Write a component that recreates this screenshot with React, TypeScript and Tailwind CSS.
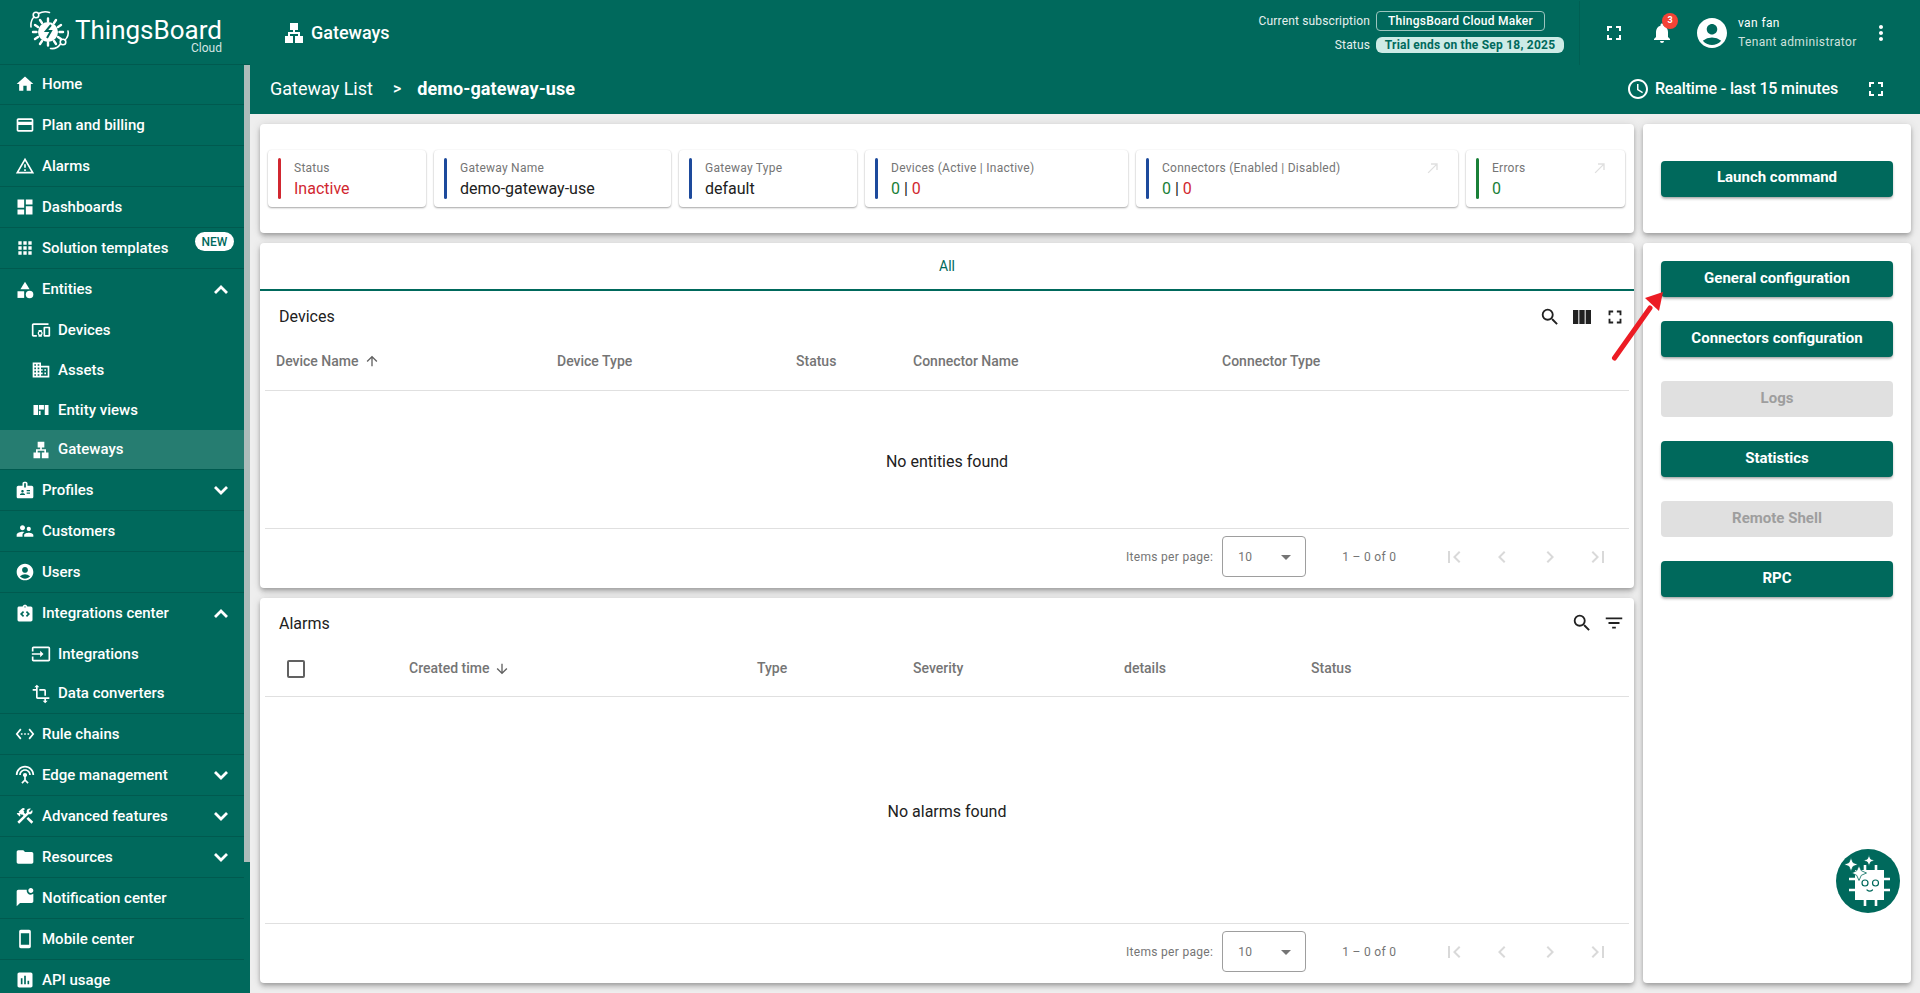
import {
  MdAccessTime,
  MdAccountCircle,
  MdApps,
  MdArrowDownward,
  MdArrowDropDown,
  MdArrowUpward,
  MdBadge,
  MdCallMade,
  MdCategory,
  MdChevronLeft,
  MdChevronRight,
  MdConstruction,
  MdCreditCard,
  MdDashboard,
  MdDevicesOther,
  MdDomain,
  MdFilterList,
  MdFirstPage,
  MdFolder,
  MdFullscreen,
  MdHome,
  MdInput,
  MdInsertChart,
  MdIntegrationInstructions,
  MdLan,
  MdLastPage,
  MdMarkChatUnread,
  MdMoreVert,
  MdNotifications,
  MdOutlineWarningAmber,
  MdSearch,
  MdSettingsEthernet,
  MdSettingsInputAntenna,
  MdSmartphone,
  MdSupervisorAccount,
  MdTransform,
  MdViewColumn,
} from 'react-icons/md';
import type { IconBaseProps, IconType } from 'react-icons';

// no package has this one
const EntityViewIcon = ({ size, className }: IconBaseProps) => (
  <svg width={size} height={size} viewBox="0 0 24 24" fill="currentColor" className={className}>
    <rect x="3" y="6" width="5.500" height="12" />
    <rect x="9.500" y="6" width="6" height="5.500" />
    <rect x="9.500" y="13" width="2" height="5" />
    <rect x="16.500" y="6" width="4.500" height="12" />
  </svg>
);

// the package chevrons are too thin here
const Chevron = ({ up }: { up?: boolean }) => (
  <svg width="24" height="24" viewBox="0 0 24 24" className="absolute left-[209px]">
    <path
      d={up ? 'M6 15l6-6 6 6' : 'M6 9l6 6 6-6'}
      fill="none"
      stroke="currentColor"
      strokeWidth="2.800"
    />
  </svg>
);

type NavItem = {
  label: string;
  icon: IconType;
  sub?: boolean;
  active?: boolean;
  chevron?: 'up' | 'down';
  isNew?: boolean;
};

const navItems: NavItem[] = [
  { label: 'Home', icon: MdHome },
  { label: 'Plan and billing', icon: MdCreditCard },
  { label: 'Alarms', icon: MdOutlineWarningAmber },
  { label: 'Dashboards', icon: MdDashboard },
  { label: 'Solution templates', icon: MdApps, isNew: true },
  { label: 'Entities', icon: MdCategory, chevron: 'up' },
  { label: 'Devices', icon: MdDevicesOther, sub: true },
  { label: 'Assets', icon: MdDomain, sub: true },
  { label: 'Entity views', icon: EntityViewIcon, sub: true },
  { label: 'Gateways', icon: MdLan, sub: true, active: true },
  { label: 'Profiles', icon: MdBadge, chevron: 'down' },
  { label: 'Customers', icon: MdSupervisorAccount },
  { label: 'Users', icon: MdAccountCircle },
  { label: 'Integrations center', icon: MdIntegrationInstructions, chevron: 'up' },
  { label: 'Integrations', icon: MdInput, sub: true },
  { label: 'Data converters', icon: MdTransform, sub: true },
  { label: 'Rule chains', icon: MdSettingsEthernet },
  { label: 'Edge management', icon: MdSettingsInputAntenna, chevron: 'down' },
  { label: 'Advanced features', icon: MdConstruction, chevron: 'down' },
  { label: 'Resources', icon: MdFolder, chevron: 'down' },
  { label: 'Notification center', icon: MdMarkChatUnread },
  { label: 'Mobile center', icon: MdSmartphone },
  { label: 'API usage', icon: MdInsertChart },
];

const cardShadow =
  'shadow-[0_2px_4px_-1px_rgba(0,0,0,0.2),0_4px_5px_0_rgba(0,0,0,0.14),0_1px_10px_0_rgba(0,0,0,0.12)]';

const NavRow = ({ item, next }: { item: NavItem; next?: NavItem }) => {
  const Icon = item.icon;
  return (
    <div
      className={`relative flex shrink-0 items-center text-[15px] font-medium text-white ${
        item.sub ? 'h-[40px] pl-[31px]' : 'h-[41px] pl-[15px]'
      } ${item.active ? 'bg-[#267d71]' : ''} ${
        !next?.sub ? 'border-b border-[#005a4f]' : ''
      }`}
    >
      <Icon size={20} className="shrink-0" />
      <span className="ml-[7px]">{item.label}</span>
      {item.chevron && <Chevron up={item.chevron === 'up'} />}
      {item.isNew && (
        <span className="absolute left-[195px] top-[4px] flex h-[19px] w-[39px] items-center justify-center rounded-full bg-white text-[12px] font-medium text-[#00695c]">
          NEW
        </span>
      )}
    </div>
  );
};

const Logo = () => (
  <svg width="44" height="46" viewBox="0 0 44 46" className="shrink-0">
    <g fill="none" stroke="white" strokeWidth="1.600" strokeLinecap="round">
      <path d="M1 18c-.5-5 1-8 3-10" />
      <circle cx="6" cy="6" r="2.800" />
      <path d="M8.500 4.500c3-1.500 8-2 11-1" />
      <path d="M38 22c1 4 0 6-3 9" />
      <circle cx="33" cy="33" r="2.800" />
      <path d="M30.500 35c-2 3-6 5-10 4.500" />
    </g>
    <g stroke="white" strokeWidth="2.400" strokeLinecap="round">
      <path d="M18 12.500v-3M24 14l2-3M28 18l3-2M29.500 23h3.500M28 28l3 2M24 32l2 3M18 33.500v3M12 32l-2 3M8 28l-3 2M6.500 23H3M8 18l-3-2M12 14l-2-3" />
    </g>
    <circle cx="18" cy="23" r="10" fill="white" />
    <path d="M21 16l-5 6h5l-4 7" fill="none" stroke="#00695c" strokeWidth="2" />
  </svg>
);

const Tile = ({
  width,
  bar,
  label,
  children,
  link,
}: {
  width: string;
  bar: string;
  label: string;
  children: React.ReactNode;
  link?: boolean;
}) => (
  <div
    className={`relative flex h-[57px] shrink-0 items-center rounded-[4px] bg-white pl-[10px] shadow-[0_1px_2px_rgba(0,0,0,0.35),0_0_2px_rgba(0,0,0,0.06)] ${width}`}
  >
    <div className={`h-[41px] w-[3px] rounded-full ${bar}`} />
    <div className="ml-[13px] pt-[1px]">
      <div className="text-[12px] leading-[16px] tracking-[0.25px] text-[#757575]">{label}</div>
      <div className="mt-[3px] text-[16px] leading-[20px]">{children}</div>
    </div>
    {link && <MdCallMade size={16} className="absolute right-[17px] top-[10px] text-[#dfdfdf]" />}
  </div>
);

const ZeroPair = () => (
  <>
    <span className="text-[#198038]">0</span>
    <span className="text-[#212121]"> | </span>
    <span className="text-[#d12730]">0</span>
  </>
);

const Pagination = () => (
  <div className="h-[60px] shrink-0 border-t border-[#e0e0e0] pt-[7px] text-[12px] tracking-[0.3px] text-[#757575]">
    <div className="flex h-[41px] items-center">
      <span className="ml-[861px]">Items per page:</span>
      <div className="ml-[9px] flex h-[41px] w-[84px] items-center rounded-[4px] border border-[#9e9e9e] pl-[15px] pr-[7px]">
        <span>10</span>
        <MdArrowDropDown size={24} className="ml-auto" />
      </div>
      <span className="ml-[36px] w-[79px]">1 – 0 of 0</span>
      <div className="ml-[21px] flex items-center gap-[24px] text-[#d9d9d9]">
        <MdFirstPage size={24} />
        <MdChevronLeft size={24} />
        <MdChevronRight size={24} />
        <MdLastPage size={24} />
      </div>
    </div>
  </div>
);

const HeaderCell = ({ width, children }: { width: string; children: React.ReactNode }) => (
  <div className={`flex shrink-0 items-center text-[14px] font-medium text-[#757575] ${width}`}>
    {children}
  </div>
);

const ActionButton = ({ label, disabled }: { label: string; disabled?: boolean }) => (
  <div
    className={`flex h-[36px] items-center justify-center rounded-[4px] pb-[2px] text-[15px] font-bold ${
      disabled
        ? 'bg-[#e0e0e0] text-[#9e9e9e]'
        : 'bg-[#00695c] text-white shadow-[0_2px_3px_-1px_rgba(0,0,0,0.3),0_2px_3px_0_rgba(0,0,0,0.14)]'
    }`}
  >
    {label}
  </div>
);

const ChipBot = () => (
  <svg width="64" height="64" viewBox="0 0 64 64">
    <circle cx="32" cy="32" r="32" fill="#00695c" />
    <g stroke="white" strokeWidth="2.600">
      <path d="M29 16v6M40 16v6M29 50v7M40 50v7M13 30h7M13 41h7M47 30h7M47 41h7" />
    </g>
    <rect x="19" y="21" width="29" height="30" fill="white" />
    <path
      d="M15 8.500l2 5 5 2-5 2-2 5-2-5-5-2 5-2zM33 6l1.600 3.900 3.900 1.600-3.900 1.600L33 17l-1.600-3.900-3.900-1.600 3.900-1.600zM23 16.500l2.300 5.200 5.200 2.300-5.200 2.300-2.300 5.200-2.300-5.200-5.200-2.300 5.200-2.300z"
      fill="white"
      stroke="#00695c"
      strokeWidth="0.800"
    />
    <g fill="none" stroke="#00695c" strokeWidth="1.200" strokeLinecap="round">
      <circle cx="29" cy="34" r="3" />
      <circle cx="39.500" cy="34" r="3" />
      <path d="M31 41c1.500 1.300 4 1.300 5.500 0" />
    </g>
  </svg>
);

export default function App() {
  return (
    <div className="relative flex h-screen w-full overflow-hidden bg-[#eeeeee] font-['Roboto',sans-serif] text-[#212121]">
      {/* sidebar */}
      <aside className="flex w-[250px] shrink-0 flex-col bg-[#00695c] text-white">
        <div className="flex h-[65px] shrink-0 items-center border-b border-[#005a4f] pl-[30px]">
          <Logo />
          <div className="ml-[1px] flex flex-col items-end">
            <span className="mt-[10px] text-[26px] leading-[22px]">ThingsBoard</span>
            <span className="text-[12px] leading-[14px] text-[#d5e5e3]">Cloud</span>
          </div>
        </div>
        <div className="flex min-h-0 flex-1">
          <nav className="mt-[-1px] flex w-[244px] shrink-0 flex-col overflow-hidden">
            {navItems.map((item, i) => (
              <NavRow key={item.label} item={item} next={navItems[i + 1]} />
            ))}
          </nav>
          <div className="h-[797px] w-[6px] bg-[#aebcba]" />
        </div>
      </aside>

      {/* main column */}
      <div className="flex min-w-0 flex-1 flex-col">
        <header className="flex h-[65px] shrink-0 items-center bg-[#00695c] text-white">
          <MdLan size={24} className="ml-[32px]" />
          <span className="ml-[5px] text-[18px] font-medium">Gateways</span>
          <div className="ml-auto flex flex-col gap-[5px] text-[12px] tracking-[0.15px]">
            <div className="flex items-center justify-end">
              <span className="mr-[6px] text-[#e6f0ef]">Current subscription</span>
              <span className="mr-[19px] flex h-[20px] w-[169px] items-center justify-center rounded-[4px] border border-[#9cc4be] font-medium tracking-[0.25px]">
                ThingsBoard Cloud Maker
              </span>
            </div>
            <div className="flex items-center justify-end">
              <span className="mr-[6px] text-[#e6f0ef]">Status</span>
              <span className="flex h-[16px] w-[188px] items-center justify-center rounded-[6px] bg-[#cdebe6] font-bold tracking-[0.22px] text-[#00695c]">
                Trial ends on the Sep 18, 2025
              </span>
            </div>
          </div>
          <div className="ml-[15px] flex h-[64px] w-[341px] items-center border-l border-[#005f53]">
            <MdFullscreen size={24} className="ml-[22px]" />
            <div className="relative ml-[24px]">
              <MdNotifications size={24} />
              <span className="absolute left-[12px] top-[-8px] flex h-[16px] w-[16px] items-center justify-center rounded-full bg-[#f44336] text-[9px] font-bold">
                3
              </span>
            </div>
            <MdAccountCircle size={36} className="ml-[20px]" />
            <div className="ml-[8px] flex flex-col text-[12px] leading-[19px] tracking-[0.38px]">
              <span>van fan</span>
              <span className="text-[#cfe1de]">Tenant administrator</span>
            </div>
            <MdMoreVert size={24} className="ml-[12px]" />
          </div>
        </header>

        <div className="flex h-[49px] shrink-0 items-center bg-[#00695c] pb-[2px] text-white">
          <span className="ml-[20px] text-[18px]">Gateway List</span>
          <span className="ml-[20px] text-[16px] font-medium">&gt;</span>
          <span className="ml-[16px] text-[18px] font-bold tracking-[0.1px]">demo-gateway-use</span>
          <MdAccessTime size={24} className="ml-auto" />
          <span className="ml-[5px] text-[16px] font-medium tracking-[-0.15px]">Realtime - last 15 minutes</span>
          <MdFullscreen size={24} className="ml-[26px] mr-[32px]" />
        </div>

        <main className="flex min-h-0 flex-1 gap-[9px] pl-[10px] pt-[10px]">
          <div className="flex w-[1374px] shrink-0 flex-col gap-[10px]">
            <section className={`flex h-[109px] shrink-0 items-center gap-[8px] rounded-[4px] bg-white pl-[8px] ${cardShadow}`}>
              <Tile width="w-[158px]" bar="bg-[#d12730]" label="Status">
                <span className="text-[#d12730]">Inactive</span>
              </Tile>
              <Tile width="w-[237px]" bar="bg-[#1d4a9c]" label="Gateway Name">
                demo-gateway-use
              </Tile>
              <Tile width="w-[178px]" bar="bg-[#1d4a9c]" label="Gateway Type">
                default
              </Tile>
              <Tile width="w-[263px]" bar="bg-[#1d4a9c]" label="Devices (Active | Inactive)">
                <ZeroPair />
              </Tile>
              <Tile width="w-[322px]" bar="bg-[#1d4a9c]" label="Connectors (Enabled | Disabled)" link>
                <ZeroPair />
              </Tile>
              <Tile width="w-[159px]" bar="bg-[#198038]" label="Errors" link>
                <span className="text-[#198038]">0</span>
              </Tile>
            </section>

            <section className={`flex h-[345px] shrink-0 flex-col rounded-[4px] bg-white ${cardShadow}`}>
              <div className="flex h-[48px] shrink-0 items-center justify-center border-b-2 border-[#00695c] text-[14px] text-[#00695c]">
                All
              </div>
              <div className="mx-[5px] flex flex-1 flex-col">
                <div className="flex h-[52px] shrink-0 items-center pl-[14px]">
                  <span className="text-[16px]">Devices</span>
                  <MdSearch size={22} className="ml-auto" />
                  <MdViewColumn size={24} className="ml-[9px]" />
                  <MdFullscreen size={22} className="ml-[10px] mr-[3px]" />
                </div>
                <div className="flex h-[48px] shrink-0 items-center border-b border-[#e0e0e0] pb-[11px] pl-[11px]">
                  <HeaderCell width="w-[281px]">
                    Device Name
                    <MdArrowUpward size={16} className="ml-[5px] text-[#616161]" />
                  </HeaderCell>
                  <HeaderCell width="w-[239px]">Device Type</HeaderCell>
                  <HeaderCell width="w-[117px]">Status</HeaderCell>
                  <HeaderCell width="w-[309px]">Connector Name</HeaderCell>
                  <HeaderCell width="w-[200px]">Connector Type</HeaderCell>
                </div>
                <div className="flex flex-1 items-center justify-center pt-[4px] text-[16px]">No entities found</div>
                <Pagination />
              </div>
            </section>

            <section className={`flex h-[385px] shrink-0 flex-col rounded-[4px] bg-white ${cardShadow}`}>
              <div className="mx-[5px] flex flex-1 flex-col">
                <div className="flex h-[50px] shrink-0 items-center pl-[14px]">
                  <span className="mt-[2px] text-[16px]">Alarms</span>
                  <MdSearch size={22} className="ml-auto" />
                  <MdFilterList size={22} className="ml-[10px] mr-[4px]" />
                </div>
                <div className="flex h-[49px] shrink-0 items-center border-b border-[#e0e0e0] pb-[7px] pl-[22px]">
                  <div className="h-[18px] w-[18px] shrink-0 rounded-[2px] border-2 border-[#616161]" />
                  <div className="w-[104px] shrink-0" />
                  <HeaderCell width="w-[348px]">
                    Created time
                    <MdArrowDownward size={16} className="ml-[5px] text-[#616161]" />
                  </HeaderCell>
                  <HeaderCell width="w-[156px]">Type</HeaderCell>
                  <HeaderCell width="w-[211px]">Severity</HeaderCell>
                  <HeaderCell width="w-[187px]">details</HeaderCell>
                  <HeaderCell width="w-[100px]">Status</HeaderCell>
                </div>
                <div className="flex flex-1 items-center justify-center pt-[4px] text-[16px]">No alarms found</div>
                <Pagination />
              </div>
            </section>
          </div>

          <div className="flex w-[268px] shrink-0 flex-col gap-[10px]">
            <section className={`flex h-[109px] shrink-0 flex-col justify-center rounded-[4px] bg-white px-[18px] ${cardShadow}`}>
              <ActionButton label="Launch command" />
            </section>
            <section className={`flex h-[740px] shrink-0 flex-col gap-[24px] rounded-[4px] bg-white px-[18px] pt-[18px] ${cardShadow}`}>
              <ActionButton label="General configuration" />
              <ActionButton label="Connectors configuration" />
              <ActionButton label="Logs" disabled />
              <ActionButton label="Statistics" />
              <ActionButton label="Remote Shell" disabled />
              <ActionButton label="RPC" />
            </section>
          </div>
        </main>
      </div>

      {/* floating assistant button */}
      <div className="absolute left-[1836px] top-[849px]">
        <ChipBot />
      </div>

      {/* red annotation arrow */}
      <svg className="absolute left-[1600px] top-[280px]" width="80" height="90" viewBox="0 0 80 90">
        <path d="M14.500 78L50 28" stroke="#ec1c24" strokeWidth="5" strokeLinecap="round" fill="none" />
        <path d="M63 12L45 18L59 31Z" fill="#ec1c24" />
      </svg>
    </div>
  );
}
